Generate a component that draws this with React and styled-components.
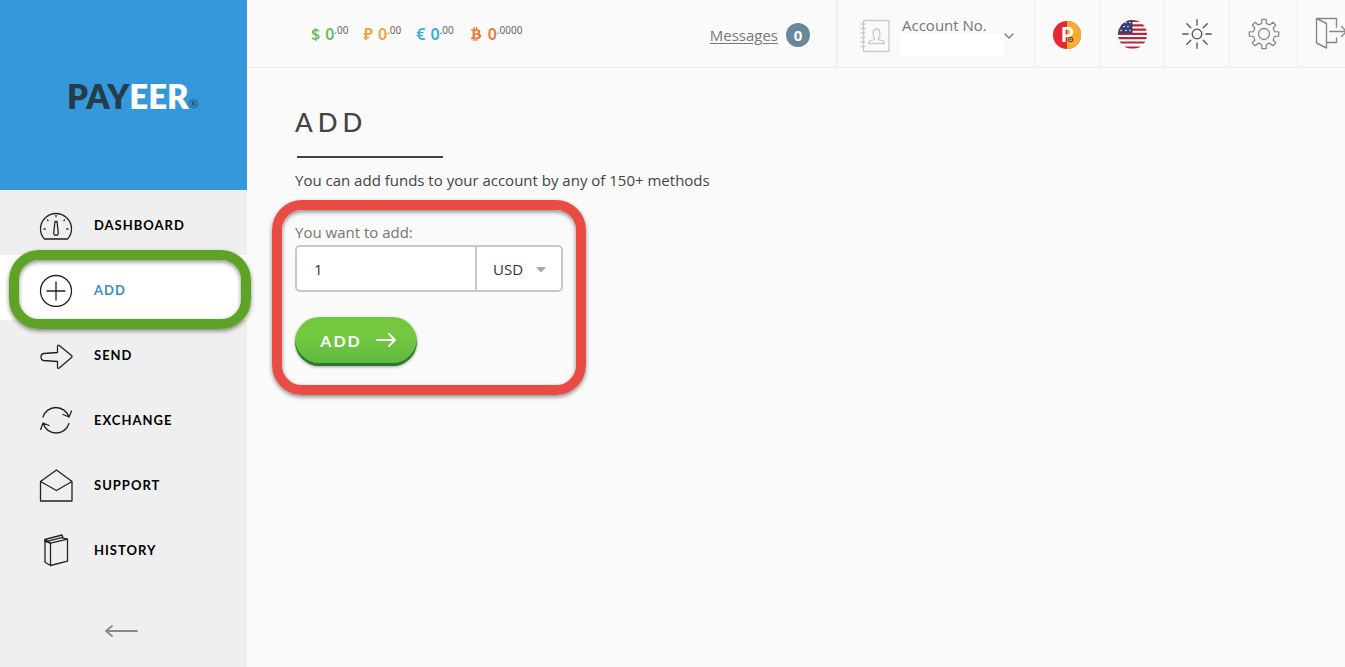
import styled, { createGlobalStyle } from "styled-components";
import { FaBtc, FaCaretDown } from "react-icons/fa";

const GlobalStyle = createGlobalStyle`
  * {
    box-sizing: border-box;
  }

  body {
    margin: 0;
    background-color: #fafafa;
    font-family: "Open Sans", sans-serif;
    font-size: 15px;
    color: #444;
    overflow-x: hidden;
  }
`;

const Page = styled.div`
  display: flex;
  min-height: 100vh;
`;

const Sidebar = styled.aside`
  flex: none;
  width: 247px;
  background-color: #efefef;
`;

const Logo = styled.a`
  display: flex;
  align-items: flex-end;
  height: 190px;
  padding: 0 0 74px 67px;
  background-color: #3498db;
  color: #253c4b;
  font-family: Lato, sans-serif;
  font-size: 33px;
  font-weight: 800;
  line-height: 40px;
  text-decoration: none;

  span {
    color: #fff;
  }
`;

const Registered = styled.small`
  font-size: 12px;
  font-weight: 400;
  line-height: 24px;
`;

const NavList = styled.ul`
  margin: 0;
  padding: 0;
  list-style: none;
`;

const NavItem = styled.li`
  position: relative;
  background-color: ${({ $active }) => ($active ? "#fff" : "transparent")};
`;

const NavLink = styled.a`
  display: flex;
  align-items: center;
  gap: 21px;
  height: 65px;
  padding: 4px 0 0 39px;
  color: ${({ $active }) => ($active ? "#3c8dc5" : "#000")};
  font-family: Lato, sans-serif;
  font-size: 13px;
  font-weight: 700;
  letter-spacing: 1px;
  text-decoration: none;
`;

const Highlight = styled.div`
  position: absolute;
  inset: ${({ $inset }) => $inset};
  border: 10px solid ${({ $color }) => $color};
  border-radius: 30px;
  box-shadow: 0 2px 4px rgba(0, 0, 0, 0.45),
    inset 0 2px 4px rgba(0, 0, 0, 0.45);
  pointer-events: none;
  z-index: 1;
`;

const CollapseButton = styled.button`
  display: block;
  margin: 41px 0 0 104px;
  padding: 0;
  border: 0;
  background: none;
  line-height: 0;
  cursor: pointer;
`;

const LineIcon = styled.svg`
  flex: none;
  fill: none;
  stroke: ${({ $color }) => $color || "#222"};
  stroke-width: ${({ $weight }) => $weight || 1.3};
  stroke-linecap: round;
  stroke-linejoin: round;
`;

const Content = styled.div`
  flex: 1;
  min-width: 0;
`;

const Header = styled.header`
  display: flex;
  height: 68px;
  border-bottom: 1px solid #ededed;
`;

const Balances = styled.div`
  flex: 1;
  display: flex;
  align-items: center;
  gap: 15px;
  padding-left: 64px;
`;

const Balance = styled.span`
  display: flex;
  align-items: center;
  gap: 5px;
  color: ${({ $color }) => $color};
  font-family: "Noto Sans", sans-serif;
  font-size: 16px;
  font-weight: 600;
  line-height: 20px;
  white-space: nowrap;

  sup {
    color: #666;
    font-size: 10px;
    font-weight: 400;
    line-height: 0;
    vertical-align: 6px;
  }
`;

const Messages = styled.a`
  display: flex;
  align-items: center;
  gap: 8px;
  padding: 3px 26px 0 0;
  color: #777;
  text-decoration: none;

  span {
    text-decoration: underline;
    text-underline-offset: 2px;
  }
`;

const Badge = styled.b`
  width: 24px;
  height: 24px;
  border-radius: 50%;
  background-color: #67879a;
  color: #fff;
  line-height: 24px;
  text-align: center;
`;

const Account = styled.button`
  display: flex;
  align-items: center;
  width: 198px;
  padding: 4px 0 0 22px;
  border: 0;
  border-left: 2px solid #f0f0f0;
  background: none;
  color: #777;
  font: inherit;
  cursor: pointer;
`;

const AccountText = styled.span`
  display: flex;
  flex-direction: column;
  width: 104px;
  margin: 0 0 0 10px;
  line-height: 18px;
  text-align: left;
  white-space: nowrap;
  text-indent: 2px;
`;

const AccountNumber = styled.span`
  height: 22px;
  background-color: #fff;
`;

const HeaderButton = styled.button`
  display: flex;
  align-items: center;
  justify-content: ${({ $edge }) => ($edge ? "flex-start" : "center")};
  flex: none;
  width: ${({ $width }) => $width || 65}px;
  padding: 0 0 0 ${({ $edge }) => ($edge ? "17px" : "0")};
  border: 0;
  border-left: 1px solid #ededed;
  background: none;
  overflow: hidden;
  cursor: pointer;
`;

const Main = styled.main`
  padding: 36px 48px;
`;

const Title = styled.h1`
  width: 148px;
  margin: 0 0 12px;
  color: #444;
  font-family: Lato, sans-serif;
  font-size: 26px;
  font-weight: 500;
  line-height: 36px;
  letter-spacing: 5px;

  &::after {
    content: "";
    display: block;
    height: 2px;
    margin: 16px 0 0 2px;
    background-color: #444;
  }
`;

const Intro = styled.p`
  margin: 0;
  line-height: 20px;
`;

const Form = styled.form`
  position: relative;
  width: 268px;
  margin-top: 32px;
`;

const Label = styled.label`
  display: block;
  padding-bottom: 3px;
  color: #777;
  line-height: 20px;
`;

const Field = styled.div`
  display: flex;
  height: 47px;
  border: 2px solid #c8c8c8;
  border-radius: 5px;
  background-color: #fff;
  overflow: hidden;
`;

const AmountInput = styled.input`
  flex: 1;
  min-width: 0;
  padding: 0 17px;
  border: 0;
  background: none;
  color: #333;
  font: inherit;
  outline: none;
`;

const CurrencyWrap = styled.div`
  display: grid;
  align-items: center;
  width: 86px;
  border-left: 2px solid #c8c8c8;

  > * {
    grid-area: 1 / 1;
  }

  svg {
    justify-self: end;
    margin-right: 12px;
    pointer-events: none;
  }
`;

const CurrencySelect = styled.select`
  appearance: none;
  width: 100%;
  height: 100%;
  padding: 0 16px;
  border: 0;
  background: none;
  color: #333;
  font: inherit;
  outline: none;
`;

const SubmitButton = styled.button`
  display: flex;
  align-items: center;
  justify-content: center;
  gap: 14px;
  width: 122px;
  height: 49px;
  margin-top: 25px;
  padding: 0 0 3px 4px;
  border: 0;
  border-radius: 25px;
  background: linear-gradient(#73c840 40%, #5cb83f);
  box-shadow: inset 0 -3px 0 #30762f, 0 1px 3px rgba(0, 0, 0, 0.35);
  color: #fff;
  font-family: Lato, sans-serif;
  font-size: 16px;
  font-weight: 700;
  letter-spacing: 2px;
  cursor: pointer;
`;

const DashboardIcon = () => (
  <LineIcon width="34" height="34" viewBox="0 0 34 34">
    <path d="M5.5 31C2.5 28 1.5 24.5 1.5 21a15.5 15.5 0 0 1 31 0c0 3.500-1 7-4 10z" />
    <path d="M16 13.500h2l1.300 11.500c.2 3-4.800 3-4.600 0zM17 7.500v1M8.500 12l.6.6M25.500 12l-.6.6M5 21h1.200M27.800 21h1.200" />
  </LineIcon>
);

const AddIcon = () => (
  <LineIcon width="34" height="34" viewBox="0 0 34 34">
    <circle cx="17" cy="18" r="15.500" />
    <path d="M17 9v18M8 18h18" />
  </LineIcon>
);

const SendIcon = () => (
  <LineIcon width="34" height="34" viewBox="0 0 34 34">
    <path d="M4.500 15.500 18.500 14.500V8.500q0-2 1.800-1L32.500 17.500q1 1 0 2L20.300 30q-1.800 1-1.800-1v-5.500L4.500 22.500Q2 22 2 19t2.500-3.500z" />
  </LineIcon>
);

const ExchangeIcon = () => (
  <LineIcon width="34" height="34" viewBox="0 0 34 34">
    <path d="M4 14A13.500 13.500 0 0 1 29.800 14M24 11.500l6 2.500 2.500-6" />
    <path d="M30 20.500A13.500 13.500 0 0 1 4.200 20.500M10 22.500 4 20l-2.300 6.500" />
  </LineIcon>
);

const SupportIcon = () => (
  <LineIcon width="34" height="34" viewBox="0 0 34 34">
    <path d="M1.500 13.500 17.500 2l15.500 11.500V33H1.500zM1.500 13.500 17.500 22.500 33 13.500" />
  </LineIcon>
);

const HistoryIcon = () => (
  <LineIcon width="34" height="34" viewBox="0 0 34 34">
    <path d="M6 6.500v22.800l5.500 3.200V10.200zM11.500 10.200 28.500 6.200v22l-17 4.300" />
    <path d="M6 6.500 23 2l1.200 3.200 4.300 1M6 6.500v2l5.500 1.700M7 8.700 23.800 4.300" />
  </LineIcon>
);

const navItems = [
  { label: "DASHBOARD", Icon: DashboardIcon },
  { label: "ADD", Icon: AddIcon, active: true },
  { label: "SEND", Icon: SendIcon },
  { label: "EXCHANGE", Icon: ExchangeIcon },
  { label: "SUPPORT", Icon: SupportIcon },
  { label: "HISTORY", Icon: HistoryIcon },
];

const balances = [
  { sign: "$", color: "#6dbb63", cents: ".00" },
  { sign: "₽", color: "#f0a33f", cents: ".00" },
  { sign: "€", color: "#31b1e0", cents: ".00" },
  { sign: <FaBtc size={14} />, color: "#ea7a35", cents: ".0000" },
];

const AddressBookIcon = () => (
  <LineIcon width="30" height="34" viewBox="0 0 30 34" $color="#c9c9c9">
    <path d="M3.500 1.500H29v31H3.500z" />
    <path d="M1 5h4M1 9.500h4M1 14h4M1 18.500h4M1 23h4M1 27.500h4" />
    <path d="M14.500 19c-2-2-2.500-9 2-9s4 7 2 9v1.500l5 1.500q1 1 1 2.500h-16q0-1.500 1-2.500l5-1.500z" />
  </LineIcon>
);

const PayeerIcon = () => (
  <svg width="30" height="30" viewBox="0 0 30 30">
    <circle cx="15" cy="16" r="14" fill="#e32832" />
    <path d="M15 2a14 14 0 0 1 0 28z" fill="#f7ad31" />
    <text x="9" y="23" fill="#fff" fontFamily="Lato" fontSize="20" fontWeight="900">
      P
    </text>
    <circle cx="18.500" cy="20.500" r="2.300" fill="none" stroke="#443322" />
    <circle cx="18.500" cy="20.500" r="0.800" fill="#443322" />
  </svg>
);

const FlagIcon = () => (
  <svg width="30" height="30" viewBox="0 0 30 30">
    <clipPath id="flag-circle">
      <circle cx="15.500" cy="15.500" r="14.500" />
    </clipPath>
    <g clipPath="url(#flag-circle)">
      <path fill="#fff" d="M0 0h30v30H0z" />
      <path
        stroke="#b5283c"
        strokeWidth="2.200"
        d="M0 2h30M0 6.300h30M0 10.600h30M0 14.900h30M0 19.200h30M0 23.500h30M0 28.500h30"
      />
      <path fill="#3d3d72" d="M0 0h15.500v14.500H0z" />
      <path
        stroke="#fff"
        strokeWidth="1.600"
        strokeLinecap="round"
        d="M9 3.500h0M13 3.500h0M7 7.500h0M11 7.500h0M4 11.500h0M9 11.500h0M13 11.500h0"
      />
    </g>
  </svg>
);

const SunIcon = () => (
  <LineIcon width="30" height="30" viewBox="0 0 30 30" $color="#555">
    <circle cx="15" cy="15" r="4.800" />
    <path d="M15 .7v5.500M15 23.800v5.500M.7 15h5.500M23.800 15h5.500M4.800 4.800l4 4M21.200 21.200l4 4M25.200 4.800l-4 4M8.800 21.200l-4 4" />
  </LineIcon>
);

const gearTeeth = Array.from({ length: 8 }, (_, i) => {
  const point = (radius, degrees) => {
    const angle = ((i * 45 + degrees) * Math.PI) / 180;
    const x = 16 + radius * Math.cos(angle);
    const y = 16 + radius * Math.sin(angle);
    return `${x.toFixed(1)} ${y.toFixed(1)}`;
  };
  return `${i ? "L" : "M"}${point(11, -12)}L${point(14.800, -8)}L${point(14.800, 8)}L${point(11, 12)}Q${point(10.300, 22)} ${point(11, 33)}`;
}).join("");

const GearIcon = () => (
  <LineIcon width="32" height="32" viewBox="0 0 32 32" $color="#888">
    <path d={`${gearTeeth}z`} />
    <circle cx="16" cy="16" r="5.500" />
  </LineIcon>
);

const ExitIcon = () => (
  <LineIcon width="34" height="34" viewBox="0 0 34 34" $color="#888" $weight={1.4}>
    <path d="M1.500 1.500 11.500 6.500V31L1.500 26zM1.500 1.500H21.500V10M21.500 21v4.500H12M15 14.500h16M26.500 9.500l5 5-5 5" />
  </LineIcon>
);

export default function App() {
  return (
    <Page>
      <GlobalStyle />
      <Sidebar>
        <Logo href="#">
          PAY<span>EER</span>
          <Registered>®</Registered>
        </Logo>
        <nav>
          <NavList>
            {navItems.map(({ label, Icon, active }) => (
              <NavItem key={label} $active={active}>
                <NavLink href="#" $active={active}>
                  <Icon />
                  {label}
                </NavLink>
                {active && <Highlight $color="#5ea226" $inset="-5px -4px -9px 9px" />}
              </NavItem>
            ))}
          </NavList>
        </nav>
        <CollapseButton type="button" aria-label="Collapse menu">
          <LineIcon width="34" height="20" viewBox="0 0 34 20" $color="#888" $weight={1.8}>
            <path d="M33 10H2M8 5l-6 5 6 5" />
          </LineIcon>
        </CollapseButton>
      </Sidebar>
      <Content>
        <Header>
          <Balances>
            {balances.map(({ sign, color, cents }) => (
              <Balance key={color} $color={color}>
                {sign}
                <span>
                  0<sup>{cents}</sup>
                </span>
              </Balance>
            ))}
          </Balances>
          <Messages href="#">
            <span>Messages</span>
            <Badge>0</Badge>
          </Messages>
          <Account type="button">
            <AddressBookIcon />
            <AccountText>
              Account No.
              <AccountNumber />
            </AccountText>
            <LineIcon width="10" height="6" viewBox="0 0 10 6" $color="#777">
              <path d="M1 1l4 4 4-4" />
            </LineIcon>
          </Account>
          <HeaderButton type="button" aria-label="Payeer">
            <PayeerIcon />
          </HeaderButton>
          <HeaderButton type="button" aria-label="Language">
            <FlagIcon />
          </HeaderButton>
          <HeaderButton type="button" aria-label="Brightness">
            <SunIcon />
          </HeaderButton>
          <HeaderButton type="button" aria-label="Settings" $width={68}>
            <GearIcon />
          </HeaderButton>
          <HeaderButton type="button" aria-label="Log out" $width={48} $edge>
            <ExitIcon />
          </HeaderButton>
        </Header>
        <Main>
          <Title>ADD</Title>
          <Intro>You can add funds to your account by any of 150+ methods</Intro>
          <Form onSubmit={(event) => event.preventDefault()}>
            <Label htmlFor="amount">You want to add:</Label>
            <Field>
              <AmountInput id="amount" type="text" defaultValue="1" />
              <CurrencyWrap>
                <CurrencySelect aria-label="Currency" defaultValue="USD">
                  <option>USD</option>
                  <option>EUR</option>
                  <option>RUB</option>
                </CurrencySelect>
                <FaCaretDown size={16} color="#aaa" />
              </CurrencyWrap>
            </Field>
            <SubmitButton type="submit">
              ADD
              <LineIcon width="20" height="16" viewBox="0 0 20 16" $color="#fff" $weight={1.8}>
                <path d="M1 8h18M13 2l6 6-6 6" />
              </LineIcon>
            </SubmitButton>
            <Highlight $color="#e84c45" $inset="-22px -23px -29px -23px" />
          </Form>
        </Main>
      </Content>
    </Page>
  );
}
